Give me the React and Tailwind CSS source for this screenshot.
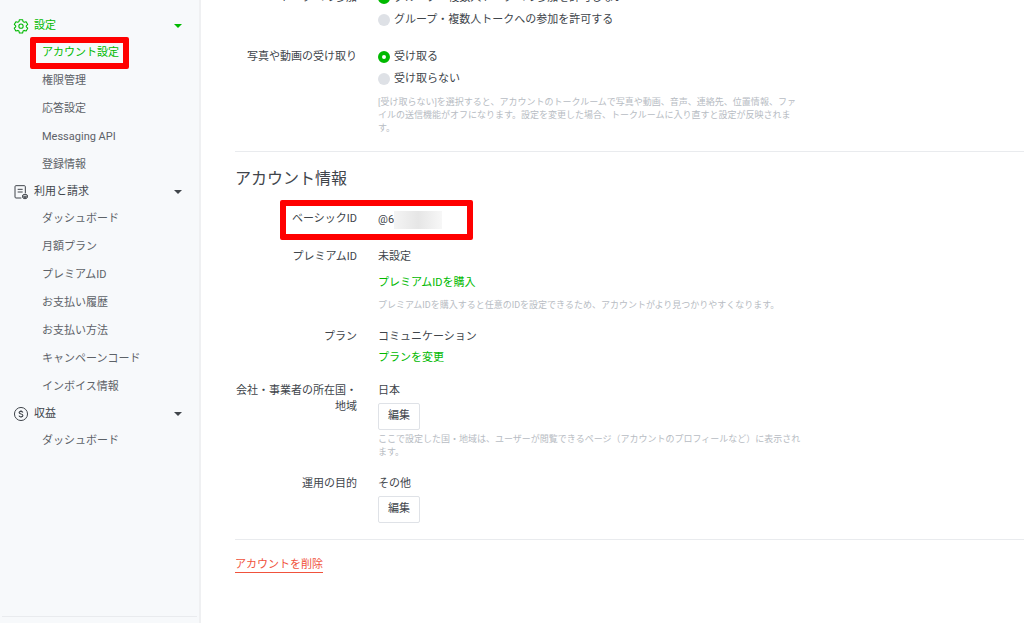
import { clsx } from 'clsx';

const menu = [
    {
        title: '設定',
        icon: GearIcon,
        active: true,
        items: ['アカウント設定', '権限管理', '応答設定', 'Messaging API', '登録情報'],
    },
    {
        title: '利用と請求',
        icon: BillIcon,
        items: [
            'ダッシュボード',
            '月額プラン',
            'プレミアムID',
            'お支払い履歴',
            'お支払い方法',
            'キャンペーンコード',
            'インボイス情報',
        ],
    },
    {
        title: '収益',
        icon: CoinIcon,
        items: ['ダッシュボード'],
    },
];

function GearIcon() {
    return (
        <svg viewBox="0 0 24 24" className="size-4" fill="none" stroke="currentColor" strokeWidth="1.6" strokeLinejoin="round">
            <path d="M9.6 2.5h4.8l.7 2.9 1.7 1 2.9-.9 2.4 4.2-2.2 2v1.6l2.2 2-2.4 4.2-2.9-.9-1.7 1-.7 2.900H9.600l-.7-2.900-1.700-1-2.900.9-2.400-4.200 2.200-2v-1.600l-2.200-2 2.400-4.200 2.900.9 1.700-1z" />
            <circle cx="12" cy="12.2" r="3.2" />
        </svg>
    );
}

function BillIcon() {
    return (
        <svg viewBox="0 0 24 24" className="size-4" fill="none" stroke="currentColor" strokeWidth="1.5">
            <path d="M12.5 21h-8A1.5 1.5 0 0 1 3 19.500V4a1.500 1.500 0 0 1 1.500-1.500H17A1.500 1.500 0 0 1 18.500 4v10" />
            <path d="M7 8h7.500M7 12h7.500" />
            <ellipse cx="18" cy="17" rx="3.500" ry="1.500" />
            <path d="M14.500 17v3.500c0 2 7 2 7 0V17M14.500 19c0 1.500 7 1.500 7 0" />
        </svg>
    );
}

function CoinIcon() {
    return (
        <svg viewBox="0 0 24 24" className="size-4" fill="none" stroke="currentColor" strokeWidth="1.5">
            <circle cx="12" cy="12" r="9.8" />
            <path
                d="M14.800 9.700c-.3-1-1.300-1.700-2.800-1.700-3.800 0-3.800 3.500 0 4s3.800 4.200 0 4.200c-1.600 0-2.700-.7-3-1.900M12 6.300V8M12 16v1.800"
                strokeWidth="1.7"
            />
        </svg>
    );
}

function Caret() {
    return (
        <svg viewBox="0 0 8 4" className="h-1 w-2" fill="currentColor">
            <path d="M0 0h8L4 4z" />
        </svg>
    );
}

// Red frame drawn over the area that the guide points at
function Marker({ className }) {
    return <span className={clsx('pointer-events-none absolute rounded-xs border-6 border-[#ff0000]', className)} />;
}

function MenuGroup({ title, icon: Icon, active, items }) {
    return (
        <section>
            <button
                type="button"
                className={clsx(
                    'flex h-[26px] w-full items-center gap-[5px] pr-[17px] pl-[13px]',
                    active ? 'text-[#00b900]' : 'text-[#40454b]'
                )}
            >
                <Icon />
                <span className="flex-1 text-left">{title}</span>
                <Caret />
            </button>
            <ul>
                {items.map((item, i) => (
                    <li key={item} className="relative flex h-7 items-center pl-[42px]">
                        <a href="#" className={active && i === 0 ? 'text-[#00b900]' : 'text-[#5d6268]'}>
                            {item}
                        </a>
                        {active && i === 0 && <Marker className="-top-0.5 left-[30px] h-8 w-[99px]" />}
                    </li>
                ))}
            </ul>
        </section>
    );
}

function Field({ label, children }) {
    return (
        <div className="flex gap-[21px]">
            <dt className="w-[122px] shrink-0 pt-[3px] text-right leading-4">{label}</dt>
            <dd className="max-w-[426px] flex-1">{children}</dd>
        </div>
    );
}

function Value({ children }) {
    return <p className="leading-[22px]">{children}</p>;
}

function Hint({ className, children }) {
    return <p className={clsx('text-[9px] leading-[13px] text-[#b7bcc3]', className)}>{children}</p>;
}

function Radio({ name, checked, children }) {
    return (
        <label className="flex h-[22px] items-center gap-1">
            <input
                type="radio"
                name={name}
                defaultChecked={checked}
                className="size-3 appearance-none rounded-full bg-[#dee1e6] checked:border-4 checked:border-[#00b900] checked:bg-white"
            />
            {children}
        </label>
    );
}

function EditButton() {
    return (
        <button type="button" className="mt-px flex h-[27px] items-center rounded-xs border border-[#dfe2e7] px-[9px]">
            編集
        </button>
    );
}

export default function App() {
    return (
        <div className="flex h-screen overflow-hidden bg-white font-[Roboto,'Noto_Sans_CJK_JP',sans-serif] text-[11px] text-[#40454b]">
            {/* Sidebar */}
            <aside className="flex w-[201px] shrink-0 flex-col border-r-2 border-[#eff0f2] bg-[#f7f9fb]">
                <nav className="flex-1 pt-[13px]">
                    {menu.map((group) => (
                        <MenuGroup key={group.title} {...group} />
                    ))}
                </nav>
                <div className="mx-0.5 mb-1.5 border-t border-[#e9ebee]" />
            </aside>

            {/* Settings, scrolled down to the account section */}
            <main className="-mt-[13px] min-w-0 flex-1 pl-[34px]">
                <dl className="space-y-[15px] pb-4">
                    <Field label="トークへの参加">
                        <Radio name="group" checked>グループ・複数人トークへの参加を許可しない</Radio>
                        <Radio name="group">グループ・複数人トークへの参加を許可する</Radio>
                    </Field>
                    <Field label="写真や動画の受け取り">
                        <Radio name="media" checked>受け取る</Radio>
                        <Radio name="media">受け取らない</Radio>
                        <Hint className="mt-1.5">
                            [受け取らない]を選択すると、アカウントのトークルームで写真や動画、音声、連絡先、位置情報、ファイルの送信機能がオフになります。設定を変更した場合、トークルームに入り直すと設定が反映されます。
                        </Hint>
                    </Field>
                </dl>

                <section className="border-y border-[#e9ebee] pt-[15px] pb-4">
                    <h2 className="text-base leading-6">アカウント情報</h2>
                    <dl className="mt-[17px] space-y-3.5">
                        <div className="relative">
                            <Field label="ベーシックID">
                                <p className="flex h-6 items-center">
                                    @6
                                    <span className="h-[18px] w-12 bg-linear-to-r from-[#f4f4f4] via-[#e6e6e6] to-[#f7f7f7]" />
                                </p>
                            </Field>
                            <Marker className="-top-2 left-[45px] h-10 w-[193px]" />
                        </div>
                        <Field label="プレミアムID">
                            <Value>未設定</Value>
                            <a href="#" className="mt-[7px] block leading-4 text-[#00b900]">プレミアムIDを購入</a>
                            <Hint className="mt-2">
                                プレミアムIDを購入すると任意のIDを設定できるため、アカウントがより見つかりやすくなります。
                            </Hint>
                        </Field>
                        <Field label="プラン">
                            <Value>コミュニケーション</Value>
                            <a href="#" className="mt-0.5 block leading-4 text-[#00b900]">プランを変更</a>
                        </Field>
                        <Field label="会社・事業者の所在国・地域">
                            <Value>日本</Value>
                            <EditButton />
                            <Hint className="mt-[3px]">
                                ここで設定した国・地域は、ユーザーが閲覧できるページ（アカウントのプロフィールなど）に表示されます。
                            </Hint>
                        </Field>
                        <Field label="運用の目的">
                            <Value>その他</Value>
                            <EditButton />
                        </Field>
                    </dl>
                </section>

                <a href="#" className="mt-[18px] inline-block border-b border-[#f0523c] leading-[14px] text-[#f0523c]">
                    アカウントを削除
                </a>
            </main>
        </div>
    );
}
